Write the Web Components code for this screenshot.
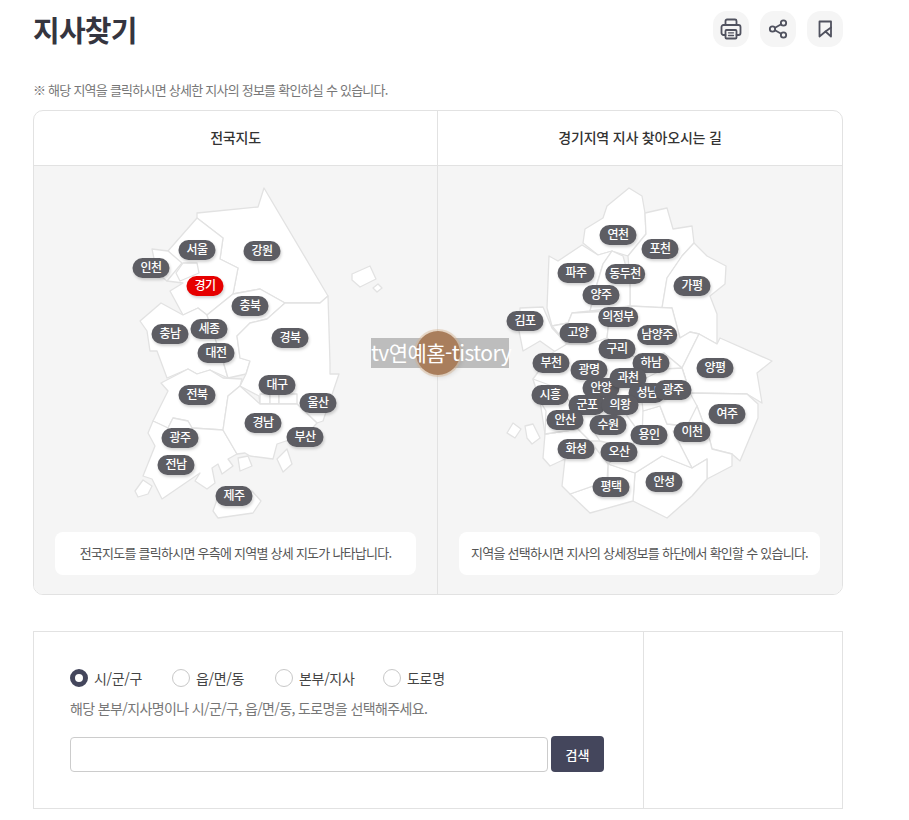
<!DOCTYPE html>
<html lang="ko">
<head>
<meta charset="utf-8">
<title>지사찾기</title>
<style>
  html, body { margin: 0; background: #fff; }
  body { font-family: "Noto Sans CJK KR", "Noto Sans", sans-serif; color: #333; }
</style>
</head>
<body>
<branch-page>
  <page-title slot="title" text="지사찾기"></page-title>
  <map-frame slot="maps"></map-frame>
  <search-box slot="search"></search-box>
</branch-page>

<script>
  const koreaShapes = [
    '197,212 258,206 264,187 328,295 320,302 285,302 260,288 233,293 238,267 220,258 223,237 197,217',
    '197,217 223,237 220,258 238,267 233,293 207,314 198,307 183,314 170,290 183,282 167,280 180,262 168,250',
    '152,248 168,250 182,262 167,280 157,272',
    '183,262 197,262 199,272 180,280 176,272',
    '140,320 161,302 183,314 198,307 207,314 210,323 223,360 228,377 210,369 197,373 188,368 167,377 157,350 150,350 147,330',
    '207,314 233,293 260,288 285,302 267,318 250,322 237,335 240,357 250,360 246,373 228,377 223,360 210,323',
    '285,302 320,302 328,295 330,363 330,373 339,373 323,420 317,422 297,403 260,403 259,395 240,385 246,373 250,360 240,357 237,335 250,322 267,318',
    '260,393 270,393 270,403 260,403',
    '270,393 279,393 279,403 270,403',
    '279,393 297,393 297,403 279,403',
    '161,382 188,368 197,373 210,369 223,377 242,378 240,385 228,395 223,429 192,427 188,420 173,417 168,427 153,420 168,390',
    '153,420 168,427 173,417 188,420 192,427 223,429 237,453 228,458 233,465 222,473 218,463 212,467 215,482 207,488 195,480 200,472 162,498 152,478 143,475 155,445 148,432',
    '240,385 260,403 297,403 317,422 307,433 277,443 273,458 250,455 245,452 237,453 223,429 228,395',
    '277,458 287,448 292,463 283,471',
    '238,457 248,455 252,465 240,470',
    '135,490 143,479 152,485 148,493 138,496',
    '220,490 252,490 261,500 253,512 218,517 213,510',
    '352,273 370,265 376,278 360,286 352,279',
    '373,287 378,283 382,287 377,291'
  ];

  const gyeonggiShapes = [
    '629,187 642,195 645,212 646,233 628,255 612,250 598,254 583,242 585,228 603,217 607,205',
    '645,212 667,207 673,228 692,225 694,242 682,255 667,277 662,307 630,305 630,280 628,255 646,233',
    '694,242 707,255 726,265 725,283 710,295 717,313 717,343 699,333 690,331 680,337 672,307 662,307 667,277 682,255',
    '549,255 558,260 582,244 598,254 612,250 603,263 597,283 590,310 572,312 568,322 552,325 547,307',
    '612,250 623,255 630,280 630,305 590,310 597,283 603,263',
    '520,307 543,306 552,327 567,343 557,352 540,340 523,350 519,330',
    '552,325 568,322 572,312 610,310 607,337 590,343 567,343',
    '610,310 630,305 672,307 680,337 690,331 699,333 682,367 664,352 640,360 607,337',
    '717,343 720,337 772,360 757,372 762,402 747,393 690,392 682,367 699,333',
    '690,392 747,393 758,403 758,417 740,460 732,453 712,448 710,440 697,405 692,410',
    '697,405 710,440 712,448 732,453 732,465 707,478 707,458 692,467 673,430',
    '635,472 662,455 692,467 707,458 707,478 692,495 667,517 633,500',
    '570,493 608,480 608,463 635,472 633,500 590,512',
    '545,433 578,428 590,440 608,463 607,480 570,493 562,485 565,458 550,465 543,457',
    '552,352 567,343 590,343 607,337 640,360 664,352 682,367 690,392 692,410 673,430 652,425 626,440 590,440 578,428 545,433 540,400 533,378',
    '643,410 660,405 667,423 687,425 673,430 692,467 662,455 635,472 608,463 628,447 642,435',
    '640,380 664,368 682,367 690,392 697,405 687,425 667,423 660,405 643,410',
    '590,425 600,415 625,412 642,435 628,447 600,440',
    '545,433 546,410 540,400 533,378 552,385 570,400 578,428',
    '507,432 513,422 521,428 515,437',
    '525,425 533,423 540,437 532,443 527,437'
  ];

  const koreaPins = [
    ['서울', 197, 249], ['강원', 262, 250], ['인천', 151, 267], ['경기', 205, 285, 'on'],
    ['충북', 250, 305], ['세종', 209, 328], ['충남', 170, 333], ['대전', 216, 352],
    ['경북', 290, 337], ['대구', 277, 384], ['울산', 318, 402], ['전북', 197, 394],
    ['경남', 263, 422], ['부산', 305, 436], ['광주', 180, 437], ['전남', 176, 464], ['제주', 234, 495]
  ];

  const gyeonggiPins = [
    ['연천', 618, 234], ['포천', 660, 248], ['파주', 576, 272], ['동두천', 625, 273],
    ['가평', 692, 285], ['양주', 601, 294], ['의정부', 618, 316], ['김포', 525, 320],
    ['고양', 578, 332], ['남양주', 657, 334], ['구리', 617, 348], ['부천', 551, 362],
    ['하남', 651, 362], ['광명', 589, 369], ['양평', 715, 367], ['안양', 601, 387],
    ['과천', 628, 377], ['성남', 647, 392], ['광주', 673, 389], ['시흥', 550, 394],
    ['군포', 587, 404], ['의왕', 620, 404], ['여주', 727, 413], ['안산', 565, 419],
    ['수원', 608, 424], ['용인', 649, 434], ['이천', 692, 431], ['화성', 576, 448],
    ['오산', 619, 451], ['안성', 664, 481], ['평택', 611, 486]
  ];

  class BranchPage extends HTMLElement {
    constructor() {
      super();
      this.attachShadow({ mode: 'open' });
      this.shadowRoot.innerHTML = `
        <style>
          :host { display: block; width: 810px; padding: 0 33px; }
          .maps { margin-top: 10px; }
          .search { margin-top: 36px; }
          .note {
            margin: 0;
            padding-top: 23px;
            height: 20px;
            font-size: 13px;
            line-height: 20px;
            color: #777;
            letter-spacing: -0.76px;
          }
        </style>
        <slot name="title"></slot>
        <p class="note">※ 해당 지역을 클릭하시면 상세한 지사의 정보를 확인하실 수 있습니다.</p>
        <div class="maps"><slot name="maps"></slot></div>
        <div class="search"><slot name="search"></slot></div>
      `;
    }
  }

  class PageTitle extends HTMLElement {
    constructor() {
      super();
      this.attachShadow({ mode: 'open' });
      this.shadowRoot.innerHTML = `
        <style>
          :host { display: flex; justify-content: space-between; height: 57px; }
          h1 {
            margin: 0;
            padding-top: 7px;
            font-size: 29px;
            line-height: 44px;
            font-weight: 700;
            color: #35353f;
            letter-spacing: -0.8px;
          }
          .tools { display: flex; gap: 11px; padding-top: 11px; }
          .tool {
            width: 36px;
            height: 36px;
            border-radius: 14px;
            background: #f5f5f5;
            display: flex;
            align-items: center;
            justify-content: center;
          }
          svg { fill: none; stroke: #50525f; stroke-width: 1.8; stroke-linejoin: round; stroke-linecap: round; }
        </style>
        <h1></h1>
        <div class="tools">
          <div class="tool">
            <svg width="24" height="24" viewBox="0 0 24 24">
              <path d="M6.5 8V4a1.5 1.5 0 0 1 1.5-1.5h8A1.5 1.5 0 0 1 17.500 4v4"/>
              <path d="M6.500 18H4.500A2 2 0 0 1 2.500 16v-6a2 2 0 0 1 2-2h15a2 2 0 0 1 2 2v6a2 2 0 0 1-2 2h-2"/>
              <rect x="6.500" y="13" width="11" height="8.500" rx="1"/>
              <path d="M9.500 15.800h5M9.500 18.500h5" stroke-width="1.300"/>
            </svg>
          </div>
          <div class="tool">
            <svg width="24" height="24" viewBox="0 0 24 24">
              <circle cx="17.500" cy="6" r="2.700"/>
              <circle cx="6.500" cy="12" r="2.700"/>
              <circle cx="17.500" cy="18" r="2.700"/>
              <path d="M9 10.700l6.200-3.400M9 13.300l6.200 3.400"/>
            </svg>
          </div>
          <div class="tool">
            <svg width="24" height="24" viewBox="0 0 24 24">
              <path d="M6.500 4.500h11.500v15l-5.500-5-6 5z"/>
              <path d="M12.500 14.500l5.500-4"/>
            </svg>
          </div>
        </div>
      `;
      this.shadowRoot.querySelector('h1').textContent = this.getAttribute('text');
    }
  }

  class MapFrame extends HTMLElement {
    constructor() {
      super();
      this.attachShadow({ mode: 'open' });
      this.shadowRoot.innerHTML = `
        <style>
          :host {
            display: block;
            position: relative;
            border: 1px solid #e2e2e2;
            border-radius: 10px;
            overflow: hidden;
          }
          .cols { display: grid; grid-template-columns: 403px 1fr; }
          .col + .col { border-left: 1px solid #e2e2e2; }
          h2 {
            margin: 0;
            height: 54px;
            line-height: 53px;
            text-align: center;
            font-size: 14px;
            font-weight: 500;
            color: #333;
            border-bottom: 1px solid #e2e2e2;
            letter-spacing: -0.2px;
          }
          .body {
            background: #f5f5f5;
            height: 428px;
            display: flex;
            flex-direction: column;
            justify-content: space-between;
          }
          caption-note { margin: 0 21px 19px; }
          .r caption-note { margin: 0 22px 19px 21px; }
        </style>
        <div class="cols">
          <section class="col">
            <h2>전국지도</h2>
            <div class="body">
              <region-map id="korea"></region-map>
              <caption-note>전국지도를 클릭하시면 우측에 지역별 상세 지도가 나타납니다.</caption-note>
            </div>
          </section>
          <section class="col r">
            <h2>경기지역 지사 찾아오시는 길</h2>
            <div class="body">
              <region-map id="gyeonggi"></region-map>
              <caption-note>지역을 선택하시면 지사의 상세정보를 하단에서 확인할 수 있습니다.</caption-note>
            </div>
          </section>
        </div>
        <watermark-tag>tv연예홈-tistory</watermark-tag>
      `;
      this.shadowRoot.querySelector('#korea').draw(koreaShapes, koreaPins, 34, 165);
      this.shadowRoot.querySelector('#gyeonggi').draw(gyeonggiShapes, gyeonggiPins, 438, 165);
    }
  }

  class RegionMap extends HTMLElement {
    constructor() {
      super();
      this.attachShadow({ mode: 'open' });
      this.shadowRoot.innerHTML = `
        <style>
          :host { display: block; position: relative; height: 360px; }
          svg { display: block; position: absolute; left: 0; top: 0; }
          polygon { fill: #fff; stroke: #e2e2e2; stroke-width: 1.3; stroke-linejoin: round; }
        </style>
        <svg width="403" height="360"></svg>
      `;
    }

    // coordinates in the lists are measured on the page, ox/oy shifts them to this canvas
    draw(shapes, pins, ox, oy) {
      const svg = this.shadowRoot.querySelector('svg');
      svg.setAttribute('viewBox', `${ox} ${oy} 403 360`);
      shapes.forEach(points => {
        const p = document.createElementNS('http://www.w3.org/2000/svg', 'polygon');
        p.setAttribute('points', points);
        svg.appendChild(p);
      });
      pins.forEach(([name, x, y, state]) => {
        const pin = document.createElement('map-pin');
        pin.textContent = name;
        pin.style.left = (x - ox) + 'px';
        pin.style.top = (y - oy) + 'px';
        if (state) pin.setAttribute('active', '');
        this.shadowRoot.appendChild(pin);
      });
    }
  }

  class MapPin extends HTMLElement {
    constructor() {
      super();
      this.attachShadow({ mode: 'open' });
      this.shadowRoot.innerHTML = `
        <style>
          :host {
            position: absolute;
            transform: translate(-50%, -50%);
            display: block;
            min-width: 37px;
            height: 20px;
            padding: 0 4px;
            box-sizing: border-box;
            border-radius: 10px;
            background: #5d5d63;
            color: #fff;
            font-size: 12px;
            font-weight: 500;
            line-height: 18px;
            text-align: center;
            white-space: nowrap;
            letter-spacing: -0.5px;
            box-shadow: 1px 2px 3px rgba(0,0,0,.18);
          }
          :host([active]) { background: #e60000; }
        </style>
        <slot></slot>
      `;
    }
  }

  class CaptionNote extends HTMLElement {
    constructor() {
      super();
      this.attachShadow({ mode: 'open' });
      this.shadowRoot.innerHTML = `
        <style>
          :host {
            display: block;
            height: 43px;
            line-height: 41px;
            background: #fff;
            border-radius: 8px;
            text-align: center;
            font-size: 13px;
            color: #555;
            letter-spacing: -0.75px;
            white-space: nowrap;
          }
        </style>
        <slot></slot>
      `;
    }
  }

  class WatermarkTag extends HTMLElement {
    constructor() {
      super();
      this.attachShadow({ mode: 'open' });
      this.shadowRoot.innerHTML = `
        <style>
          :host {
            position: absolute;
            left: 337px;
            top: 227px;
            width: 138px;
            height: 30px;
            background: #bdbdbd;
            color: #fff;
            font-size: 21px;
            line-height: 29px;
            text-align: center;
            white-space: nowrap;
            letter-spacing: -0.55px;
            font-family: "Noto Sans CJK KR", sans-serif;
          }
          .dot {
            position: absolute;
            left: 45px;
            top: -7px;
            width: 44px;
            height: 44px;
            border-radius: 50%;
            background: #a97e5c;
            box-shadow: 0 0 0 2px rgba(215,180,145,.45), 2px 2px 5px rgba(0,0,0,.12);
          }
          span { position: relative; }
        </style>
        <div class="dot"></div>
        <span><slot></slot></span>
      `;
    }
  }

  class RadioOption extends HTMLElement {
    constructor() {
      super();
      this.attachShadow({ mode: 'open' });
      this.shadowRoot.innerHTML = `
        <style>
          :host { display: flex; align-items: center; gap: 6px; font-size: 14px; color: #444; letter-spacing: -0.3px; }
          i { display: block; width: 18px; height: 18px; box-sizing: border-box; border-radius: 50%; border: 1px solid #c8c8c8; background: #fff; }
          :host([checked]) i { border: 5px solid #44465c; }
        </style>
        <i></i><slot></slot>
      `;
    }
  }

  class SearchBox extends HTMLElement {
    constructor() {
      super();
      this.attachShadow({ mode: 'open' });
      this.shadowRoot.innerHTML = `
        <style>
          :host { display: grid; grid-template-columns: 609px 1fr; height: 176px; border: 1px solid #e2e2e2; }
          .form { padding: 35px 0 0 36px; }
          .side { border-left: 1px solid #e2e2e2; }
          .radios { display: flex; height: 22px; align-items: center; }
          radio-option:nth-child(1) { width: 102px; }
          radio-option:nth-child(2) { width: 103px; }
          radio-option:nth-child(3) { width: 108px; }
          p { margin: 9px 0 0; font-size: 14px; line-height: 20px; color: #777; letter-spacing: -0.62px; white-space: nowrap; }
          .row { display: flex; gap: 3px; margin-top: 18px; align-items: flex-start; }
          input {
            display: block;
            width: 478px;
            height: 35px;
            box-sizing: border-box;
            margin-top: 1px;
            border: 1px solid #ccc;
            border-radius: 4px;
            background: #fff;
          }
          button {
            width: 53px;
            height: 36px;
            padding: 0;
            border: 0;
            border-radius: 4px;
            background: #44465c;
            color: #fff;
            font: 500 13px "Noto Sans CJK KR", sans-serif;
          }
        </style>
        <div class="form">
          <div class="radios">
            <radio-option checked>시/군/구</radio-option>
            <radio-option>읍/면/동</radio-option>
            <radio-option>본부/지사</radio-option>
            <radio-option>도로명</radio-option>
          </div>
          <p>해당 본부/지사명이나 시/군/구, 읍/면/동, 도로명을 선택해주세요.</p>
          <div class="row">
            <input type="text" aria-label="검색어">
            <button type="button">검색</button>
          </div>
        </div>
        <div class="side"></div>
      `;
    }
  }

  // children first, so map-frame finds draw() on region-map when it builds its shadow
  customElements.define('map-pin', MapPin);
  customElements.define('region-map', RegionMap);
  customElements.define('caption-note', CaptionNote);
  customElements.define('watermark-tag', WatermarkTag);
  customElements.define('radio-option', RadioOption);
  customElements.define('search-box', SearchBox);
  customElements.define('map-frame', MapFrame);
  customElements.define('page-title', PageTitle);
  customElements.define('branch-page', BranchPage);
</script>
</body>
</html>
